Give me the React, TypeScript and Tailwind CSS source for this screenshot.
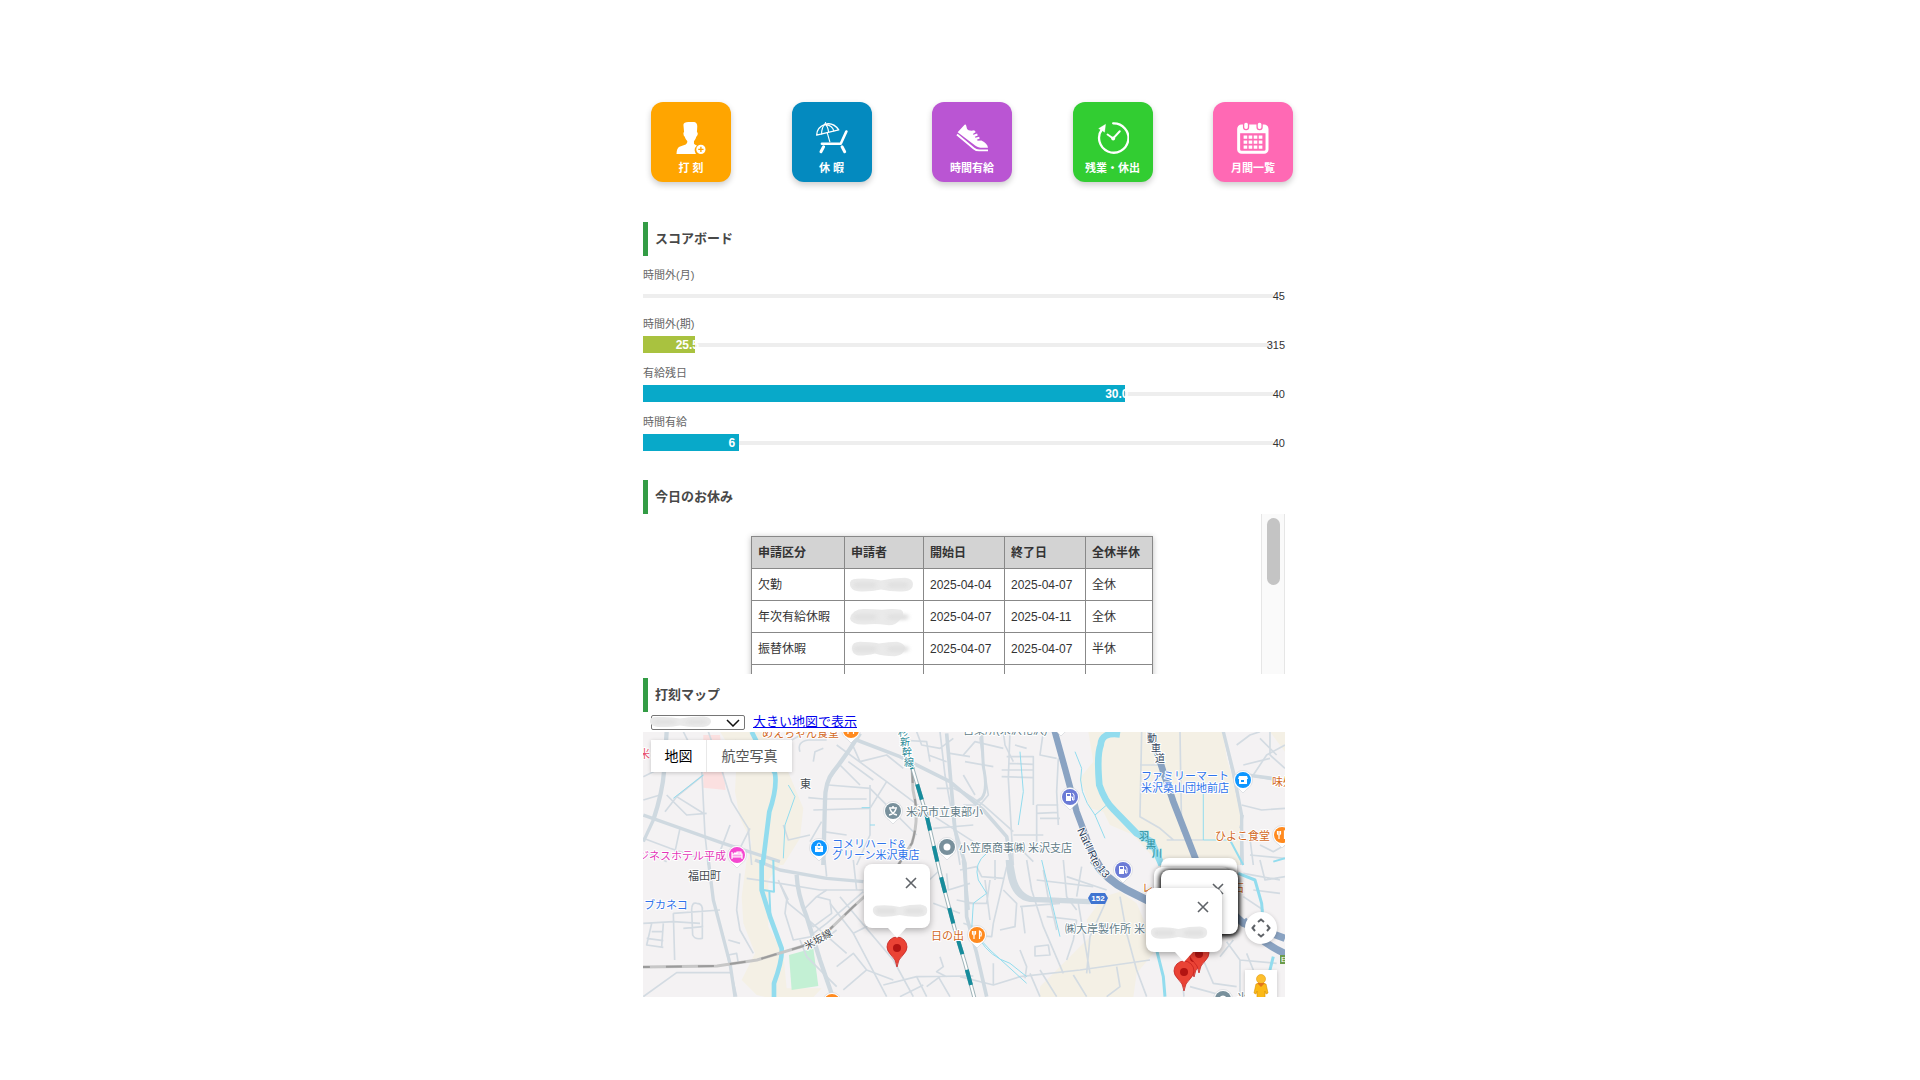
import React from "react";

const FONT = '"Liberation Sans", "Noto Sans CJK JP", sans-serif';

function PersonIcon() {
  return (
    <svg viewBox="0 0 96 97" className="h-8 w-8" fill="#fff" aria-hidden="true">
      <path d="M25 8 Q26 0 40 0 H58 Q67 2 67 14 L66 30 Q70 32 68 39 Q66 44 64 45 Q62 54 57 58 V66 Q60 69 66 71 Q58 78 59 86 Q60 92 63 97 H4 Q4 80 13 75 L32 68 Q37 66 37 58 Q31 53 29 45 Q25 42 25 35 Q25 31 27 30 Z" />
      <circle cx="78" cy="83" r="14" />
      <path d="M78 75 V91 M70 83 H86" stroke="#ffa500" strokeWidth="4" />
    </svg>
  );
}

function BeachIcon() {
  return (
    <svg viewBox="0 0 97 97" className="h-8 w-8" fill="none" stroke="#fff" strokeLinecap="round" strokeLinejoin="round" aria-hidden="true">
      <path d="M2 40 Q2 16 27 7 Q52 0 69 24 Z" strokeWidth="4" />
      <path d="M17 36 Q17 16 27 7 Q36 12 38 30 M27 7 Q50 10 54 27 M27 7 L29 2 M34 32 L42 60" strokeWidth="3.5" />
      <path d="M18 66 H75 L92 29" strokeWidth="8" />
      <path d="M23 75 L15 90 M79 75 L87 90" strokeWidth="9" />
    </svg>
  );
}

function ShoeIcon() {
  return (
    <svg viewBox="0 0 97 97" className="h-8 w-8" fill="#fff" aria-hidden="true">
      <path d="M5 31 L26 8 Q30 6 31 11 Q32 22 38 25 Q47 28 55 25 L60 30 L51 36 L53 39 L64 35 L66 41 L57 45 L59 48 L70 45 L72 50 L63 54 L66 57 L77 56 Q95 64 97 78 H74 Q65 77 60 73 Z" />
      <path d="M3 38 L54 80 Q61 86 70 86 H97" fill="none" stroke="#fff" strokeWidth="6" />
    </svg>
  );
}

function ClockIcon() {
  return (
    <svg viewBox="0 0 97 97" className="h-8 w-8" fill="none" stroke="#fff" aria-hidden="true">
      <path d="M49 4 A44.500 44.500 0 1 1 15 22" strokeWidth="7" strokeLinecap="round" />
      <path d="M5 20 L26 7 L23 31 Z" fill="#fff" />
      <path d="M32 38 L49 50 L69 28" strokeWidth="6" strokeLinecap="round" />
      <circle cx="49" cy="50" r="6" fill="#fff" stroke="none" />
    </svg>
  );
}

function CalendarIcon() {
  return (
    <svg viewBox="0 0 97 97" className="h-8 w-8" aria-hidden="true">
      <rect x="5" y="12" width="86" height="80" rx="9" fill="none" stroke="#fff" strokeWidth="9" />
      <path d="M4 12 H92 V34 H4 Z" fill="#fff" />
      <rect x="20" y="0" width="15" height="23" rx="7" fill="#fff" stroke="#ff69b4" strokeWidth="4" />
      <rect x="61" y="0" width="15" height="23" rx="7" fill="#fff" stroke="#ff69b4" strokeWidth="4" />
      <path d="M20 46 H77 M20 61 H77 M20 76 H77" stroke="#fff" strokeWidth="10" strokeDasharray="11 4.300" />
    </svg>
  );
}

const TILES = [
  { label: "打 刻", color: "bg-[#ffa500]", Icon: PersonIcon },
  { label: "休 暇", color: "bg-[#048abf]", Icon: BeachIcon },
  { label: "時間有給", color: "bg-[#ba55d3]", Icon: ShoeIcon },
  { label: "残業・休出", color: "bg-[#32cd32]", Icon: ClockIcon },
  { label: "月間一覧", color: "bg-[#ff69b4]", Icon: CalendarIcon },
];

const SCORES = [
  { label: "時間外(月)", value: "", pct: 0, max: "45", fill: "", pad: "" },
  { label: "時間外(期)", value: "25.5", pct: 8.1, max: "315", fill: "bg-[#a9c23f]", pad: "-mr-1" },
  { label: "有給残日", value: "30.0", pct: 75, max: "40", fill: "bg-[#08a9c9]", pad: "-mr-1" },
  { label: "時間有給", value: "6", pct: 15, max: "40", fill: "bg-[#08a9c9]", pad: "mr-1" },
];

const ROWS = [
  { kind: "欠勤", from: "2025-04-04", to: "2025-04-07", span: "全休" },
  { kind: "年次有給休暇", from: "2025-04-07", to: "2025-04-11", span: "全休" },
  { kind: "振替休暇", from: "2025-04-07", to: "2025-04-07", span: "半休" },
  { kind: "", from: "", to: "", span: "" },
];

const SMUDGES = [
  "M1 10 Q0 3 8 3 Q20 2 32 5 Q44 2 56 2 Q64 3 64 9 Q64 16 56 17 Q44 18 32 15 Q20 18 9 17 Q2 16 1 10 Z",
  "M1 12 Q3 1 15 1 Q25 1 33 2 Q44 0 52 2 Q57 6 51 13 Q46 20 38 19 Q28 17 20 18 Q3 20 1 12 Z",
  "M3 9 Q3 2 11 2 Q22 2 30 4 Q40 2 48 2 Q56 4 56 9 Q55 17 46 18 Q34 18 26 15 Q14 18 8 17 Q3 15 3 9 Z",
];

function Smudge({ d, className }: { d: string; className: string }) {
  return (
    <svg viewBox="0 0 66 20" preserveAspectRatio="none" className={className} aria-hidden="true">
      <path d={d} fill="#eaeaea" />
      <path d="M8 10 H24 M42 10 H56" stroke="#e1e1e1" strokeWidth="7" fill="none" strokeLinecap="round" className="blur-[2px]" />
    </svg>
  );
}

function Heading({ children }: { children: React.ReactNode }) {
  return (
    <h2 className="flex h-[34px] items-center border-l-[5px] border-[#339c45] pl-[7px] text-[13px] font-bold text-[#484848]">
      {children}
    </h2>
  );
}

const MINOR_NW = [
  "M10 155 L80 120 M130 20 L185 130 L195 330 L205 420 M205 20 L250 150 L275 230 L325 310 L335 420",
  "M75 260 L110 215 L190 150 M110 215 L190 265 M80 210 L140 270 L200 265 M10 225 L60 210",
  "M285 45 L300 140 M455 45 L500 20 M480 80 Q470 50 505 45 L560 45 M520 110 L525 80 L550 70",
  "M505 218 L550 222 L680 222 M520 255 L690 250 M560 175 L640 60 M565 180 L690 190 L830 330",
  "M590 60 L740 170 L860 260 L1000 350 M625 110 L700 165 M640 65 L660 110 L740 90 L790 130",
  "M690 250 L690 330 L650 420 M690 180 L690 255 M740 170 L690 250 M600 120 L660 180 M780 45 L860 50 L870 110",
  "M830 20 L845 60 L900 70 L940 40 M900 20 L915 150 L935 260 L960 420 M865 90 L920 110 M930 85 L990 95",
  "M545 290 L510 350 M550 320 L620 330 M430 300 L445 345 L510 330 M330 310 L290 390 M270 300 L240 380",
  "M10 340 L90 370 L180 400 M120 310 L105 380 M20 380 L80 410 M890 190 L940 190 L1000 220 M880 310 L1000 300",
];
const MINOR_SW = [
  "M10 190 L100 185 L180 190 M35 190 L20 255 L70 262 M70 190 L65 260 M20 235 L70 242 M35 215 L70 215",
  "M155 150 Q155 125 170 130 Q190 130 187 155 L187 235 Q165 240 158 225 Z M100 160 L240 150 M100 160 L104 300 M130 205 L190 200",
  "M205 0 L220 120 L250 230 L270 320 L290 410 M300 40 L290 150 L300 210 L340 280 M265 285 L290 280 L295 310 M265 240 L300 250",
  "M10 410 L110 338 L270 338 M320 55 L420 70 L540 90 L670 90 M415 60 L445 130 L500 175 L620 280",
  "M440 120 L435 160 L460 240 L540 225 M445 120 L420 70 M500 175 L520 200 L575 160 L570 120 L530 110 L490 150 M530 110 L560 90",
  "M570 130 L640 220 L740 410 M520 220 L560 190 L670 95 M600 110 L650 170 L760 300 L820 410 M550 240 L590 210",
  "M480 240 L500 290 L590 380 M590 320 L640 280 L680 330 M640 220 L760 160 L900 30 M610 390 L680 330 L760 360",
  "M730 375 L830 350 L1000 348 M830 350 L860 410 M900 290 L910 320 L890 335 L920 350 M895 350 L930 410 M780 410 L850 375",
  "M555 0 L560 50 M640 0 L650 90 M920 40 L925 90 L990 70 M950 120 L1000 130 M880 130 L960 160 M970 190 L1000 200 M860 380 L900 350",
];
const MINOR_NE = [
  "M10 90 L45 50 L130 70 M15 110 L100 125 M75 20 L60 40 L75 150 L85 210 L60 240 L10 240 M130 20 L135 60 L160 110",
  "M140 95 L220 95 L220 240 M145 115 L220 118 M125 135 L220 135 M125 155 L220 158 M150 20 L145 160 L160 420 M165 60 L200 70",
  "M295 100 L290 200 L295 300 M230 240 L295 240 M230 265 L295 262 M230 240 L230 370 L300 370 M240 280 L300 280",
  "M545 20 L540 275 L600 310 L640 345 M660 20 L665 320 M600 140 L690 360 M540 120 L600 120 M620 345 L730 345",
  "M790 20 L845 270 L850 420 M830 60 L870 30 L900 20 M860 150 L940 165 L975 165 M880 150 L920 90 L975 60",
  "M850 120 L930 100 M845 240 L905 255 L975 250 M850 270 L840 310 M870 340 L880 420 M900 360 L940 380 L975 360",
  "M10 150 L45 210 M10 200 L70 240 L160 320 M160 330 L250 330 M180 370 L220 410 M250 20 L240 90 L290 100",
  "M930 20 L930 90 L975 130 M900 40 L950 90 M855 345 L880 345 M870 390 L975 400",
];
const MINOR_SE = [
  "M0 30 L50 20 L65 50 L130 55 M105 0 L105 60 M90 60 L80 130 L15 130 M75 60 L90 180 M140 20 L100 190 L95 230 L30 225",
  "M200 0 L215 90 L250 200 L310 340 M310 0 L320 110 L350 150 M180 140 L300 130 M185 140 L195 220 M270 120 L290 210",
  "M355 130 L390 340 M480 110 L500 220 L530 330 L560 410 M440 120 L390 230 L380 340 M320 50 L440 90 M250 30 L265 115",
  "M100 310 L100 375 L0 350 M100 375 L180 350 L360 330 L570 300 M180 270 L200 320 L195 355 M225 260 L265 255 L270 285 L225 288 Z",
  "M240 330 L290 410 M340 345 L380 410 M470 320 L480 380 L440 410 M210 340 L240 410 M130 90 L170 130 L165 200 L120 210",
  "M670 390 L672 410 M820 240 L780 290 M800 245 L840 300 L840 410 M730 300 L760 370 L830 380 M840 300 L950 310",
  "M850 40 L960 60 M880 90 L960 100 M900 0 L915 60 L975 50 M850 110 L910 150 M690 380 L800 410 M860 280 L880 330",
  "M230 60 L400 80 M365 20 L350 110 M260 170 L350 180 M350 180 L340 240 L320 300",
];
const MAJOR = [
  { t: "translate(-3 -7) scale(0.3333)", w: 13, d: "M80 20 L72 140 Q68 200 40 285 M660 25 Q620 90 580 140 Q555 170 555 230 L550 420" },
  { t: "translate(-3 -7) scale(0.3333)", w: 10, d: "M10 270 L250 355 L420 410 M40 285 L10 350" },
  { t: "translate(-3 128) scale(0.3333)", w: 10, d: "M345 0 L420 30 L560 55 L670 65 M205 0 L220 120 L270 310 L285 410 M970 0 L985 150" },
  { t: "translate(-3 128) scale(0.3333)", w: 13, d: "M470 45 Q472 100 500 170 L540 300 L578 410" },
  { t: "translate(197 -2) scale(0.3333)", w: 11, d: "M50 30 L180 80 L330 155 L430 240 L500 320 L520 430 Q530 495 580 507 L700 510 M320 10 L345 300 L375 400 L380 560 L410 670 L440 800" },
  { t: "translate(197 -2) scale(0.3333)", w: 9, d: "M425 5 L430 110 Q445 180 425 205 L410 215" },
  { t: "translate(317 128) scale(0.3333)", w: 16, d: "M145 0 Q150 110 210 118 L390 125" },
  { t: "translate(317 -7) scale(0.3333)", w: 10, d: "M790 20 L820 140 L845 270 L845 420 M860 150 L975 165" },
];

const LAND = "#f4f0e5";

function pin(x: number, y: number, color: string, glyph: string) {
  return (
    <g key={`${x}-${y}`} transform={`translate(${x} ${y})`}>
      <path d="M-9.500 0 A9.500 9.500 0 1 1 9.500 0 Q9 6 4 9 L0 13 L-4 9 Q-9 6 -9.500 0 Z" fill="#fff" stroke="#c6cbd0" strokeWidth="0.500" />
      <circle r="8" fill={color} />
      {glyph === "food" && <path d="M-3 -4 V-1 M-1.500 -4 V-1 M-4.500 -4 V-1 Q-3 1 -1.500 -1 M-3 0 V4 M2.500 4 V-4 Q5 -3 4 1 H2.500" stroke="#fff" strokeWidth="1.200" fill="none" />}
      {glyph === "dot" && <circle r="3.500" fill="#fff" />}
      {glyph === "school" && <path d="M-4 -3 H4 M0 -5 V-3 M-3 -2 Q-1 3 4 4 M3 -2 Q1 3 -4 4" stroke="#fff" strokeWidth="1.500" fill="none" />}
      {glyph === "bag" && (
        <>
          <path d="M-4 -2 H4 V4 H-4 Z" fill="#fff" />
          <path d="M-2 -2 Q-2 -5 0 -5 Q2 -5 2 -2" fill="none" stroke="#fff" />
          <path d="M-1.500 0 Q0 2 1.500 0" fill="none" stroke={color} strokeWidth="0.800" />
        </>
      )}
      {glyph === "store" && <path d="M-4 -4 H4 L5 -1 H4 V4 H-4 V-1 H-5 Z M-2 0 V2 H1 V0 Z" fill="#fff" fillRule="evenodd" />}
      {glyph === "gas" && (
        <>
          <path d="M-4 -4 H1 V4 H-4 Z M-3 -3 V-1 H0 V-3 Z" fill="#fff" fillRule="evenodd" />
          <path d="M1 0 H2.500 V3 H4 V-2 L2.500 -4" fill="none" stroke="#fff" />
        </>
      )}
      {glyph === "bed" && <path d="M-5 -3 V4 M-5 2 H5 V-1 H-5 M5 4 V-1 M-3 -2 H0 V-1 M0 -3 H4 V-1 H0 Z" fill="#fff" stroke="#fff" strokeWidth="1.200" fillOpacity="0.500" />}
    </g>
  );
}

const LABELS = [
  { x: 119, y: 5, s: "めえちゃん食堂", c: "#d2691e" },
  { x: 157, y: 56, s: "東", c: "#444b50" },
  { x: 263, y: 84, s: "米沢市立東部小", c: "#627c87" },
  { x: 189, y: 116, s: "コメリハード&", c: "#2f73ea" },
  { x: 189, y: 127, s: "グリーン米沢東店", c: "#2f73ea" },
  { x: 316, y: 120, s: "小笠原商事㈱ 米沢支店", c: "#627c87" },
  { x: -16, y: 128, s: "ビジネスホテル平成", c: "#e336b8" },
  { x: 45, y: 148, s: "福田町", c: "#444b50" },
  { x: 1, y: 177, s: "ブカネコ", c: "#2f73ea" },
  { x: 288, y: 208, s: "日の出", c: "#d2691e" },
  { x: 422, y: 201, s: "㈱大岸製作所 米", c: "#627c87" },
  { x: 498, y: 48, s: "ファミリーマート", c: "#2f73ea" },
  { x: 498, y: 60, s: "米沢桑山団地前店", c: "#2f73ea" },
  { x: 629, y: 54, s: "味処", c: "#d2691e" },
  { x: 572, y: 108, s: "ひよこ食堂", c: "#d2691e" },
  { x: 320, y: 2, s: "営業所(米沢花沢)", c: "#627c87" },
  { x: 499, y: 160, s: "レ", c: "#d2691e" },
  { x: 590, y: 160, s: "石", c: "#d2691e" },
  { x: -4, y: 26, s: "米", c: "#e8506a" },
  { x: 594, y: 270, s: "米沢", c: "#627c87" },
];

function RedPin({ x, y }: { x: number; y: number }) {
  return (
    <g transform={`translate(${x} ${y})`}>
      <path d="M0 19 Q-1 11 -6 7 Q-10 3 -10 -1 A10 10 0 0 1 10 -1 Q10 3 6 7 Q1 11 0 19 Z" fill="#ea4335" stroke="#c5221f" strokeWidth="0.800" />
      <circle r="4" fill="#b31412" />
    </g>
  );
}

function Minor({ t, list }: { t: string; list: string[] }) {
  return (
    <g transform={t} fill="none" stroke="#d3dbe2" strokeWidth="5" strokeLinejoin="round">
      {list.map((d) => (
        <path key={d} d={d} />
      ))}
    </g>
  );
}

function MapDrawing() {
  const nw = "translate(-3 -7) scale(0.3333)";
  const sw = "translate(-3 128) scale(0.3333)";
  const ne = "translate(317 -7) scale(0.3333)";
  const se = "translate(317 128) scale(0.3333)";
  const rail = "M269 35 L270 58 Q277 85 269 111 L254 135 L210 175 L184 200 Q170 211 157 215 L114 228 L74 234 L0 235";
  const teal = "M269 35 L284 85 L297 141 L312 198 L322 231 L332 268";
  return (
    <svg width="642" height="265" viewBox="0 0 642 265" className="block" style={{ fontFamily: FONT }} role="img" aria-label="打刻マップ">
      <rect width="642" height="265" fill="#f4f2f3" />
      <g transform={nw}>
        <path d="M240 20 H370 L400 60 L440 130 L490 250 L480 340 L430 420 H320 L335 350 L300 280 L285 200 L290 100 Z" fill={LAND} />
        <path d="M190 30 H240 L257 195 L190 188 Z" fill="#fbe0e0" />
      </g>
      <g transform={sw}>
        <path d="M320 0 H430 L385 60 V200 L430 280 L440 385 L545 385 L520 412 H380 L350 405 L305 360 L345 280 L310 190 L305 110 Z" fill={LAND} />
        <path d="M447 285 L520 265 L535 378 L455 390 Z" fill="#c3f0d4" />
      </g>
      <path transform={ne} d="M385 20 H790 L800 100 L830 200 L850 300 L840 420 H600 L520 330 L450 300 L430 260 L390 250 L360 160 L400 110 Z M930 20 H975 V80 Z" fill={LAND} />
      <path transform={se} d="M480 95 L530 130 L560 200 L580 280 L530 340 L520 412 H240 L240 380 L330 290 L390 230 L380 180 L430 110 Z M600 0 H830 V120 L600 80 Z" fill={LAND} />
      <Minor t={nw} list={MINOR_NW} />
      <Minor t={sw} list={MINOR_SW} />
      <Minor t={ne} list={MINOR_NE} />
      <Minor t={se} list={MINOR_SE} />
      {MAJOR.map((m) => (
        <path key={m.d} transform={m.t} d={m.d} fill="none" stroke="#cfd9e0" strokeWidth={m.w} strokeLinejoin="round" />
      ))}
      <g fill="none" stroke="#92dcee" strokeLinejoin="round">
        <path transform={nw} strokeWidth="14" d="M335 20 L360 70 L405 145 Q412 190 388 260 L368 420" />
        <path transform={sw} strokeWidth="14" d="M365 0 V90 L390 170 L425 265 Q428 300 402 370 V412" />
        <path transform={sw} strokeWidth="6" d="M400 0 L402 95 L370 90 M388 95 L392 180" />
        <path transform={ne} strokeWidth="20" d="M480 28 Q425 20 422 60 Q410 90 418 180 Q435 230 462 255 L530 325 L575 350 L605 420" />
        <path transform={se} strokeWidth="9" d="M590 270 L610 350 L615 410 M835 40 L885 60 L905 130 L910 190 M940 290 L930 330 V412" />
        <path transform={ne} strokeWidth="6" d="M810 345 L850 420 M940 410 L975 400" />
        <path transform={ne} strokeWidth="3" d="M730 140 V345 L820 345 M345 80 L365 130 Q350 200 405 270 L435 340 M405 270 L440 240 M180 80 L190 200 L175 300" />
        <path transform={se} strokeWidth="3" d="M60 240 Q90 290 150 310 L200 350 M245 0 L300 230" />
        <path transform={nw} strokeWidth="3" d="M445 180 L465 215 L435 300 L430 400 M100 220 L190 150 M665 248 H690 M690 300 H705" />
        <path transform="translate(197 -2) scale(0.3333)" strokeWidth="3" d="M440 370 Q400 400 415 450 L440 490 L400 520 L395 600 L450 660 L560 760" />
      </g>
      <g fill="none" stroke="#8aa3c2">
        <path transform={ne} strokeWidth="19" d="M283 15 L315 130 L350 260 L395 380 L430 440" />
        <path transform={se} strokeWidth="24" d="M400 0 Q440 60 500 90 L600 140" />
        <path transform={ne} strokeWidth="20" d="M570 15 L610 140 L640 230 L710 410" />
        <path transform={se} strokeWidth="22" d="M710 0 Q780 130 850 190 L975 235 M850 180 Q900 250 985 285" />
      </g>
      <path d={rail} fill="none" stroke="#c7c7c7" strokeWidth="3" />
      <path d={rail} fill="none" stroke="#9b9b9b" strokeWidth="2" strokeDasharray="16 16" />
      <path d={teal} fill="none" stroke="#9fb4b9" strokeWidth="4" />
      <path d={teal} fill="none" stroke="#fff" strokeWidth="2" />
      <path d={teal} fill="none" stroke="#178c9c" strokeWidth="4" strokeDasharray="16 16" strokeDashoffset="-18" />

      {pin(208, -2, "#ff8a1f", "food")}
      {pin(250, 79, "#78909c", "school")}
      {pin(176, 116, "#0d96ff", "bag")}
      {pin(304, 115, "#78909c", "dot")}
      {pin(94, 123, "#f548d0", "bed")}
      {pin(334, 203, "#ff8a1f", "food")}
      {pin(600, 48, "#0d96ff", "store")}
      {pin(639, 103, "#ff8a1f", "food")}
      {pin(427, 65, "#6b7bd6", "gas")}
      {pin(480, 138, "#6b7bd6", "gas")}
      {pin(189, 270, "#ff8a1f", "food")}
      {pin(580, 267, "#78909c", "dot")}
      {pin(418, -9, "#b5c0c8", "dot")}

      <g fontSize="11" stroke="#fff" strokeWidth="2" paintOrder="stroke" strokeLinejoin="round">
        {LABELS.map((l) => (
          <text key={l.s} x={l.x} y={l.y} fill={l.c}>
            {l.s}
          </text>
        ))}
        <text transform="translate(434 98) rotate(65)" fill="#34465e">Nat'l Rte</text>
        <text transform="translate(454 137) rotate(52)" fill="#34465e">13</text>
        <text transform="translate(164 218) rotate(-30)" fill="#444b50" fontSize="10">米坂線</text>
      </g>
      <g fontSize="10" fill="#2b8b99" stroke="#fff" strokeWidth="2" paintOrder="stroke" textAnchor="middle">
        <text x="260" y="4">杉</text>
        <text x="262" y="14">新</text>
        <text x="264" y="24">幹</text>
        <text x="266" y="34">線</text>
      </g>
      <g fontSize="10" fill="#2b8b99" stroke="#92dcee" strokeWidth="1" paintOrder="stroke" textAnchor="middle">
        <text x="501" y="108">羽</text>
        <text x="508" y="116">黒</text>
        <text x="514" y="125">川</text>
      </g>
      <g fontSize="10" fill="#34465e" stroke="#fff" strokeWidth="2" paintOrder="stroke" textAnchor="middle">
        <text x="509" y="10">動</text>
        <text x="513" y="20">車</text>
        <text x="517" y="30">道</text>
      </g>
      <path d="M448 161 H462 L465 166 L462 172 H448 L445 166 Z" fill="#3f74d1" />
      <text x="455" y="169" fontSize="8" fontWeight="700" fill="#fff" textAnchor="middle">152</text>
      <rect x="637" y="223" width="12" height="9" fill="#6b9c4b" />
      <text x="638" y="230" fontSize="8" fill="#fff">E</text>

      <RedPin x={254} y={216} />
      <RedPin x={551} y={226} />
      <RedPin x={556} y={222} />
      <RedPin x={541} y={240} />
    </svg>
  );
}

function Cross() {
  return (
    <svg viewBox="0 0 12 12" className="h-3 w-3" stroke="#5f6368" strokeWidth="1.600" aria-hidden="true">
      <path d="M1 1 L11 11 M11 1 L1 11" />
    </svg>
  );
}

export default function App() {
  return (
    <main className="min-h-screen bg-white" style={{ fontFamily: FONT }}>
      <div className="mx-auto max-w-[650px] pt-[102px] pb-20 pl-2">
        <nav className="-mr-2 flex justify-between pl-2">
          {TILES.map(({ label, color, Icon }) => (
            <button
              key={label}
              className={`flex h-20 w-20 flex-col items-center rounded-xl pt-5 text-white shadow-[0_3px_6px_rgba(0,0,0,0.2)] ${color}`}
            >
              <Icon />
              <span className="mt-1 text-[11px] leading-5 font-bold whitespace-nowrap">{label}</span>
            </button>
          ))}
        </nav>

        <section className="mt-10">
          <Heading>スコアボード</Heading>
          <div className="mt-2">
            {SCORES.map((s) => (
              <div key={s.label} className="h-[49px] pt-px">
                <div className="text-[11px] leading-5 text-[#666]">{s.label}</div>
                <div className="relative mt-0.5 flex h-[17px] items-center">
                  <div className="mr-3 h-1 flex-1 bg-[#eee]" />
                  <span className="absolute right-0 text-[11px] leading-4 text-[#333]">{s.max}</span>
                  <div
                    className={`absolute left-0 flex h-full items-center justify-end text-xs font-bold text-white ${s.fill}`}
                    style={{ width: `${s.pct}%` }}
                  >
                    <span className={s.pad}>{s.value}</span>
                  </div>
                </div>
              </div>
            ))}
          </div>
        </section>

        <section className="mt-5">
          <Heading>今日のお休み</Heading>
          <div className="flex h-40 overflow-hidden">
            <div className="flex flex-1 justify-center overflow-hidden pt-[22px]">
              <table className="mx-[50px] h-max w-[402px] table-fixed border-collapse text-left text-xs text-[#333] shadow-[0_1px_6px_rgba(0,0,0,0.25)]">
                <colgroup>
                  <col className="w-[93px]" />
                  <col className="w-[79px]" />
                  <col className="w-[81px]" />
                  <col className="w-[81px]" />
                  <col className="w-[67px]" />
                </colgroup>
                <thead className="bg-[#d3d3d3]">
                  <tr className="h-8">
                    {["申請区分", "申請者", "開始日", "終了日", "全休半休"].map((h) => (
                      <th key={h} scope="col" className="border border-[#888] px-1.5 font-bold whitespace-nowrap">
                        {h}
                      </th>
                    ))}
                  </tr>
                </thead>
                <tbody>
                  {ROWS.map((r, i) => (
                    <tr key={i} className="h-8">
                      <td className="border border-[#888] px-1.5 whitespace-nowrap">{r.kind}</td>
                      <td className="border border-[#888] px-1">{SMUDGES[i] && <Smudge d={SMUDGES[i]} className="h-[18px] w-[66px]" />}</td>
                      <td className="border border-[#888] px-1.5 whitespace-nowrap">{r.from}</td>
                      <td className="border border-[#888] px-1.5 whitespace-nowrap">{r.to}</td>
                      <td className="border border-[#888] px-1.5 whitespace-nowrap">{r.span}</td>
                    </tr>
                  ))}
                </tbody>
              </table>
            </div>
            <div className="flex w-6 justify-center border-x border-[#e6e6e6] bg-[#fafafa] pt-1">
              <div className="h-[67px] w-[13px] rounded-full bg-[#c4c4c4]" />
            </div>
          </div>
        </section>

        <section className="mt-1">
          <Heading>打刻マップ</Heading>
          <div className="flex h-5 items-center gap-2 pl-2">
            <div className="relative flex h-[15px] w-[94px]">
              <select aria-label="社員" className="block h-[15px] w-full appearance-none rounded-[2px] border border-[#767676] bg-white p-0 text-[10px] leading-3">
                <option> </option>
              </select>
              <Smudge d={SMUDGES[0]} className="pointer-events-none absolute top-0 -left-0.5 h-[14px] w-[64px]" />
              <svg viewBox="0 0 14 8" className="pointer-events-none absolute top-1 right-[5px] h-2 w-[14px]" fill="none" stroke="#111" strokeWidth="1.500" aria-hidden="true">
                <path d="M1 1 L7 7 L13 1" />
              </svg>
            </div>
            <a href="#map" className="text-[13px] leading-5 text-[#0000ee] underline">
              大きい地図で表示
            </a>
          </div>

          <div id="map" className="relative h-[265px] overflow-hidden bg-[#f4f2f3]">
            <MapDrawing />
            <div className="absolute top-2 left-2 flex h-8 bg-white text-sm shadow-[0_1px_4px_rgba(0,0,0,0.2)]">
              <button className="w-[55px] text-black">地図</button>
              <button className="w-[86px] border-l border-[#e8e8e8] text-[#565656]">航空写真</button>
            </div>

            <div className="absolute top-[132px] left-[221px] h-16 w-[66px] rounded-lg bg-white shadow-[0_2px_7px_rgba(0,0,0,0.3)]">
              <button aria-label="閉じる" className="absolute top-[13px] right-[13px]">
                <Cross />
              </button>
              <Smudge d={SMUDGES[0]} className="absolute top-[39px] left-2 h-4 w-[57px]" />
              <div className="absolute top-full left-6 h-2.5 w-[18px] bg-white [clip-path:polygon(0_0,100%_0,50%_100%)]" />
            </div>

            <div className="absolute top-[126px] left-[518px] h-16 w-[76px] rounded-lg bg-white shadow-[0_1px_5px_rgba(0,0,0,0.3)]" />
            <div className="absolute top-[135px] left-[511px] h-16 w-[76px] rounded-lg bg-white shadow-[0_1px_5px_rgba(0,0,0,0.4)]" />
            <div className="absolute top-[138px] left-[518px] h-16 w-[77px] rounded-lg bg-white shadow-[0_1px_5px_2px_rgba(0,0,0,0.95)]">
              <button aria-label="閉じる" className="absolute top-[13px] right-[14px]">
                <Cross />
              </button>
            </div>
            <div className="absolute top-[156px] left-[503px] h-16 w-[76px] rounded-lg bg-white shadow-[0_2px_7px_rgba(0,0,0,0.35)]">
              <button aria-label="閉じる" className="absolute top-[13px] right-[13px]">
                <Cross />
              </button>
              <Smudge d={SMUDGES[0]} className="absolute top-[37px] left-1 h-4 w-[59px]" />
              <div className="absolute top-full left-[29px] h-2.5 w-[18px] bg-white [clip-path:polygon(0_0,100%_0,50%_100%)]" />
            </div>

            <button aria-label="地図のカメラ コントロール" className="absolute top-[180px] left-[602px] flex h-8 w-8 items-center justify-center rounded-full bg-white shadow-[0_1px_4px_rgba(0,0,0,0.2)]">
              <svg viewBox="0 0 20 20" className="h-5 w-5" fill="none" stroke="#5f6368" strokeWidth="2" aria-hidden="true">
                <path d="M7 4 L10 1.500 L13 4 M7 16 L10 18.500 L13 16 M4 7 L1.500 10 L4 13 M16 7 L18.500 10 L16 13" />
              </svg>
            </button>
            <button aria-label="ストリートビュー" className="absolute top-[238px] left-[602px] flex h-8 w-8 justify-center bg-white pt-1 shadow-[0_1px_4px_rgba(0,0,0,0.2)]">
              <svg viewBox="0 0 16 28" className="h-7 w-4" aria-hidden="true">
                <path d="M3 10 Q8 8 13 10 L15 19 L13 20 L12 17 V27 H4 V17 L3 20 L1 19 Z" fill="#fbb917" stroke="#d99000" strokeWidth="0.600" />
                <circle cx="8" cy="5" r="4.500" fill="#fdbf2d" stroke="#e09b10" strokeWidth="0.600" />
                <path d="M4 9 L8 13 L12 9 Z" fill="#e2761b" />
              </svg>
            </button>
          </div>
        </section>
      </div>
    </main>
  );
}
